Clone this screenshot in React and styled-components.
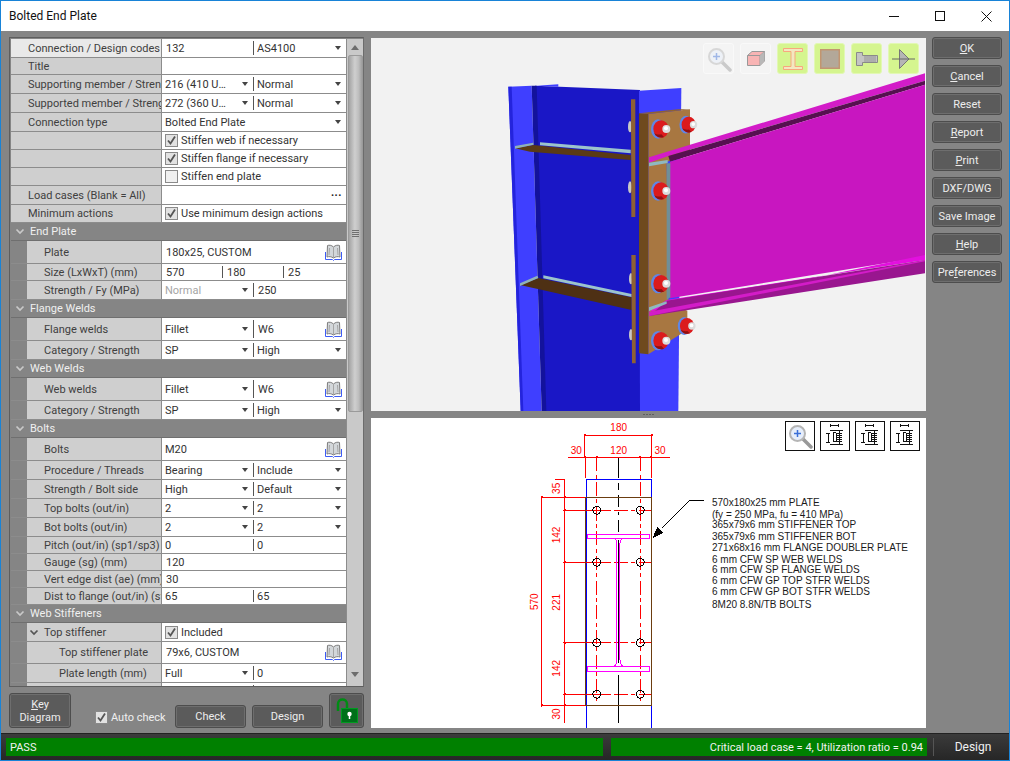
import styled, { createGlobalStyle } from "styled-components";

const GlobalStyle = createGlobalStyle`
  html, body { margin: 0; padding: 0; background: #fff; }
  * { box-sizing: border-box; }
`;

const Window = styled.div`
  width: 1010px;
  height: 761px;
  display: flex;
  flex-direction: column;
  border: 1px solid #1883d7;
  font-family: Roboto, "Noto Sans", sans-serif;
  font-size: 11px;
  overflow: hidden;
`;

const TitleBar = styled.div`
  height: 30px;
  flex: none;
  display: flex;
  align-items: center;
  padding-left: 8px;
  background: #fff;
  color: #111;
  font-size: 12px;
`;

const WinButtons = styled.div`
  margin-left: auto;
  display: flex;
`;

const WinButton = styled.div`
  width: 46px;
  height: 30px;
  display: flex;
  align-items: center;
  justify-content: center;
`;

const Body = styled.div`
  height: 702px;
  flex: none;
  display: flex;
  padding: 6px 7px 5px 8px;
  background: #858585;
`;

const LeftColumn = styled.div`
  width: 355px;
  display: flex;
  flex-direction: column;
`;

const Frame = styled.div`
  height: 650px;
  display: flex;
  padding: 1px 0 0 1px;
  border: 1px solid #5e5e5e;
  border-right-color: #6c6c6c;
`;

const Rows = styled.div`
  width: 335px;
  height: 100%;
  overflow: hidden;
`;

const RowLine = styled.div`
  display: flex;
  height: ${(p) => p.$h}px;
  border-bottom: 1px solid #8c8c8c;
  background: #858585;
`;

const Label = styled.div`
  width: ${(p) => (p.$nested ? 135 : 151)}px;
  margin-left: ${(p) => (p.$nested ? 16 : 0)}px;
  flex: none;
  display: flex;
  align-items: center;
  padding-left: ${(p) => p.$pad}px;
  background: ${(p) => (p.$active ? "#e9e9e9" : "#cfcfcf")};
  border-right: 1px solid #8c8c8c;
  color: #404040;
  white-space: nowrap;
  overflow: hidden;
`;

const Values = styled.div`
  flex: 1;
  min-width: 0;
  display: flex;
  background: #fff;
`;

const Value = styled.div`
  width: ${(p) => (p.$w ? `${p.$w}px` : "auto")};
  flex: ${(p) => (p.$w ? "none" : 1)};
  min-width: 0;
  display: flex;
  align-items: center;
  padding: 0 4px 0 ${(p) => p.$pad}px;
  border-right: ${(p) => (p.$split ? "1px solid #555" : "none")};
  margin: ${(p) => (p.$split ? "2px 0" : 0)};
  color: ${(p) => (p.$muted ? "#a5a5a5" : "#333")};
  white-space: nowrap;
  overflow: hidden;
`;

const ValueText = styled.span`
  flex: 1;
  overflow: hidden;
`;

const Caret = styled.span`
  flex: none;
  width: 0;
  height: 0;
  margin-right: 1px;
  border-left: 3.5px solid transparent;
  border-right: 3.5px solid transparent;
  border-top: 4px solid #444;
`;

const More = styled.span`
  flex: none;
  color: #222;
  font-weight: 700;
  letter-spacing: 0.5px;
  line-height: 1;
  transform: translateY(-3px);
`;

const Header = styled.div`
  height: ${(p) => p.$h}px;
  display: flex;
  align-items: center;
  padding: 0 0 1px 4px;
  gap: 5px;
  background: #858585;
  border-bottom: 1px solid #6f6f6f;
  color: #f0f0f0;
`;

const Box = styled.span`
  flex: none;
  width: 13px;
  height: 13px;
  display: inline-flex;
  align-items: center;
  justify-content: center;
  margin-right: 3px;
  background: ${(p) => (p.$on ? "#e2e2e2" : "#f0f0f0")};
  border: 1px solid #8a8a8a;
`;

const Track = styled.div`
  flex: 1;
  display: flex;
  flex-direction: column;
  align-items: center;
  background: #c9c9c9;
  border-left: 1px solid #8c8c8c;
`;

const TrackEnd = styled.div`
  height: 16px;
  flex: none;
  display: flex;
  align-items: center;
  justify-content: center;
  margin-top: ${(p) => (p.$down ? "auto" : 0)};
  padding-bottom: ${(p) => (p.$down ? 8 : 0)}px;
`;

const Arrow = styled.span`
  width: 0;
  height: 0;
  border-left: 4px solid transparent;
  border-right: 4px solid transparent;
  border-bottom: ${(p) => (p.$down ? "none" : "5px solid #6d6d6d")};
  border-top: ${(p) => (p.$down ? "5px solid #6d6d6d" : "none")};
`;

const Thumb = styled.div`
  width: 15px;
  height: 357px;
  flex: none;
  display: flex;
  flex-direction: column;
  align-items: center;
  justify-content: center;
  gap: 1px;
  background: linear-gradient(90deg, #a4a4a4, #cfcfcf 45%, #bdbdbd 75%, #9d9d9d);
  border: 1px solid #9a9a9a;
  border-radius: 2px;
`;

const Grip = styled.span`
  width: 7px;
  height: 1px;
  background: #6f6f6f;
`;

const BottomBar = styled.div`
  height: 35px;
  margin-top: 6px;
  display: flex;
  align-items: flex-end;
`;

const Button = styled.button`
  width: ${(p) => p.$w}px;
  height: ${(p) => p.$h}px;
  flex: none;
  margin-left: ${(p) => p.$ml || 0}px;
  padding: 0;
  display: flex;
  align-items: center;
  justify-content: center;
  text-align: center;
  font: inherit;
  line-height: 13px;
  color: #ededed;
  background: #5b5b5b;
  border: 1px solid #4d4d4d;
  border-radius: 3px;
  box-shadow: 0 0 0 1px #6e6e6e inset;
`;

const AutoCheck = styled.label`
  width: 80px;
  height: 16px;
  margin-left: 24px;
  margin-bottom: 3px;
  display: flex;
  align-items: center;
  color: #f0f0f0;
  white-space: nowrap;
`;

const Center = styled.div`
  width: 555px;
  margin-left: 7px;
  margin-top: 1px;
  display: flex;
  flex-direction: column;
`;

const ModelPane = styled.div`
  position: relative;
  height: 373px;
  flex: none;
  background: #f2f2f2;
`;

const Splitter = styled.div`
  height: 7px;
  flex: none;
  display: flex;
  align-items: center;
  justify-content: center;
  gap: 1px;
`;

const SplitDot = styled.span`
  width: 2px;
  height: 1px;
  background: #5f5f5f;
`;

const DrawingPane = styled.div`
  position: relative;
  height: 310px;
  flex: none;
  background: #fff;
`;

const Picture = styled.svg`
  display: block;
  width: 100%;
  height: 100%;
`;

const Overlay = styled.div`
  position: absolute;
  top: ${(p) => p.$top}px;
  right: ${(p) => p.$right}px;
  display: flex;
  gap: ${(p) => p.$gap}px;
`;

const ModelTool = styled.div`
  width: 31px;
  height: 31px;
  display: flex;
  align-items: center;
  justify-content: center;
  background: ${(p) => (p.$on ? "#d5f58f" : "#f4f4f4")};
  border: 1px solid ${(p) => (p.$on ? "#e2f8b4" : "#f9f9f9")};
  border-radius: 3px;
`;

const DrawTool = styled.div`
  width: 30px;
  height: 30px;
  display: flex;
  align-items: center;
  justify-content: center;
  background: #fff;
  border: 1px solid #111;
`;

const RightColumn = styled.div`
  width: 70px;
  margin-left: 6px;
  display: flex;
  flex-direction: column;
  gap: 6px;
`;

const StatusBar = styled.div`
  height: 27px;
  flex: none;
  display: flex;
  padding: 4px 0 4px 5px;
  background: linear-gradient(#3b3b3b, #262626);
  border-top: 1px solid #222;
`;

const StatusCell = styled.div`
  width: ${(p) => p.$w}px;
  height: 18px;
  margin-left: ${(p) => p.$ml || 0}px;
  display: flex;
  align-items: center;
  justify-content: ${(p) => (p.$end ? "flex-end" : "flex-start")};
  padding: 0 4px;
  background: #008000;
  color: #f2f2f2;
`;

const StatusLabel = styled.div`
  flex: 1;
  display: flex;
  align-items: center;
  justify-content: center;
  margin-left: 6px;
  padding-left: 3px;
  border-left: 1px solid #555;
  color: #f0f0f0;
  font-size: 12px;
`;

const ChevronWrap = styled.span`
  display: flex;
  margin-left: -15px;
  margin-right: 5px;
`;

const Chevron = ({ color = "#c9c9c9" }) => (
  <svg width="10" height="7" viewBox="0 0 10 7" style={{ flex: "none" }}>
    <path d="M1.5 1.5 5 5 8.5 1.5" fill="none" stroke={color} strokeWidth="1.7" />
  </svg>
);

const Tick = () => (
  <svg width="11" height="11" viewBox="0 0 11 11">
    <path d="M2 5.5 4.5 8.5 9 1.5" fill="none" stroke="#555" strokeWidth="1.8" />
  </svg>
);

const Book = () => (
  <svg width="17" height="17" viewBox="0 0 17 17" style={{ flex: "none" }}>
    <path d="M8.5 3C6.5 1 4 1 2.5 1.5L2 13C4 12.3 6.5 12.5 8.5 14 10.5 12.5 13 12.3 15 13L14.5 1.5C13 1 10.5 1 8.5 3Z" fill="#d3d7da" stroke="#7c7c7c" />
    <path d="M8.5 3V14M4.5 4 4 11M12.5 4 13 11" stroke="#a5a5a5" fill="none" />
    <path d="M.5 8V15.5H7.5L8.5 16.5 9.5 15.5H16.5V8" fill="none" stroke="#3d5cf5" />
  </svg>
);

const Check = ({ on, children }) => (
  <>
    <Box $on={on}>{on && <Tick />}</Box>
    {children}
  </>
);

const Cell = ({ c, w, split }) => (
  <Value $w={w} $split={split} $muted={c.muted} $pad={c.pad ?? 3}>
    {c.check !== undefined ? (
      <Check on={c.check}>{c.t}</Check>
    ) : (
      <ValueText>{c.t}</ValueText>
    )}
    {c.caret && <Caret />}
    {c.book && <Book />}
    {c.more && <More>...</More>}
  </Value>
);

// value cells: one wide, or split at the column line
const Row = ({ label, h, level = 0, active, open, cells = [{ t: "" }], widths }) => {
  const w = widths || (cells.length === 2 ? [92] : []);
  return (
    <RowLine $h={h}>
      <Label $nested={level > 0} $active={active} $pad={level === 2 ? 32 : 17}>
        {open && (
          <ChevronWrap>
            <Chevron color="#555" />
          </ChevronWrap>
        )}
        {label}
      </Label>
      <Values>
        {cells.map((c, i) => (
          <Cell key={i} c={c} w={w[i]} split={i < cells.length - 1} />
        ))}
      </Values>
    </RowLine>
  );
};

const sel = (t, extra) => ({ t, caret: true, ...extra });

const grid = [
  { label: "Connection / Design codes", h: 19, active: true, cells: [{ t: "132", pad: 4 }, sel("AS4100")] },
  { label: "Title", h: 17 },
  { label: "Supporting member / Strength", h: 19, cells: [sel("216 (410 U…"), sel("Normal")] },
  { label: "Supported member / Strength", h: 19, cells: [sel("272 (360 U…"), sel("Normal")] },
  { label: "Connection type", h: 19, cells: [sel("Bolted End Plate")] },
  { label: "", h: 18, cells: [{ t: "Stiffen web if necessary", check: true }] },
  { label: "", h: 18, cells: [{ t: "Stiffen flange if necessary", check: true }] },
  { label: "", h: 18, cells: [{ t: "Stiffen end plate", check: false }] },
  { label: "Load cases (Blank = All)", h: 19, cells: [{ t: "", more: true }] },
  { label: "Minimum actions", h: 18, cells: [{ t: "Use minimum design actions", check: true }] },
  { header: "End Plate", h: 18 },
  { label: "Plate", h: 23, level: 1, cells: [{ t: "180x25, CUSTOM", pad: 4, book: true }] },
  { label: "Size (LxWxT) (mm)", h: 17, level: 1, widths: [61, 61], cells: [{ t: "570", pad: 4 }, { t: "180", pad: 4 }, { t: "25", pad: 4 }] },
  { label: "Strength / Fy (MPa)", h: 19, level: 1, cells: [sel("Normal", { muted: true }), { t: "250", pad: 4 }] },
  { header: "Flange Welds", h: 18 },
  { label: "Flange welds", h: 23, level: 1, cells: [sel("Fillet"), { t: "W6", book: true, pad: 4 }] },
  { label: "Category / Strength", h: 19, level: 1, cells: [sel("SP"), sel("High")] },
  { header: "Web Welds", h: 18 },
  { label: "Web welds", h: 23, level: 1, cells: [sel("Fillet"), { t: "W6", book: true, pad: 4 }] },
  { label: "Category / Strength", h: 19, level: 1, cells: [sel("SP"), sel("High")] },
  { header: "Bolts", h: 18 },
  { label: "Bolts", h: 23, level: 1, cells: [{ t: "M20", book: true }] },
  { label: "Procedure / Threads", h: 19, level: 1, cells: [sel("Bearing"), sel("Include")] },
  { label: "Strength / Bolt side", h: 19, level: 1, cells: [sel("High"), sel("Default")] },
  { label: "Top bolts (out/in)", h: 19, level: 1, cells: [sel("2"), sel("2")] },
  { label: "Bot bolts (out/in)", h: 19, level: 1, cells: [sel("2"), sel("2")] },
  { label: "Pitch (out/in) (sp1/sp3) (mm)", h: 17, level: 1, cells: [{ t: "0" }, { t: "0" }] },
  { label: "Gauge (sg) (mm)", h: 17, level: 1, cells: [{ t: "120", pad: 4 }] },
  { label: "Vert edge dist (ae) (mm)", h: 17, level: 1, cells: [{ t: "30", pad: 4 }] },
  { label: "Dist to flange (out/in) (sf1/sf3) (mm)", h: 17, level: 1, cells: [{ t: "65" }, { t: "65" }] },
  { header: "Web Stiffeners", h: 18 },
  { label: "Top stiffener", h: 19, level: 1, open: true, cells: [{ t: "Included", check: true }] },
  { label: "Top stiffener plate", h: 22, level: 2, cells: [{ t: "79x6, CUSTOM", pad: 4, book: true }] },
  { label: "Plate length (mm)", h: 19, level: 2, cells: [sel("Full"), { t: "0" }] },
  { label: "", h: 19, level: 2, cells: [{ t: "" }, { t: "" }] },
];

const sideButtons = [
  [<u key="u">O</u>, "K"],
  [<u key="u">C</u>, "ancel"],
  ["Reset"],
  [<u key="u">R</u>, "eport"],
  [<u key="u">P</u>, "rint"],
  ["DXF/DWG"],
  ["Save Image"],
  [<u key="u">H</u>, "elp"],
  ["Pre", <u key="u">f</u>, "erences"],
];

const Nut = ({ x, y, s = 1 }) => (
  <g transform={`translate(${x} ${y}) scale(${s})`}>
    <ellipse cx="-8" cy="0" rx="21" ry="29" fill="#5f86e6" />
    <ellipse cx="1" cy="0" rx="23" ry="26" fill="#db1b1d" />
    <path d="M-20 12C-14 24 0 28 10 24L2 16C-6 18-14 16-20 12Z" fill="#8d1212" />
    <circle cx="17" cy="0" r="12" fill="#dcdcdc" />
    <circle cx="16" cy="-2" r="6" fill="#fff" />
  </g>
);

const Model = () => (
  <Picture viewBox="371 38 555 373">
    <g transform="translate(490 40) scale(0.33333)">
      {/* column */}
      <polygon points="55,140 125,137 155,1113 92,1113" fill="#3f3fff" />
      <polygon points="55,140 65,140 100,1113 92,1113" fill="#2424dc" />
      <polygon points="135,137 450,150 450,1113 165,1113" fill="#1a17c6" />
      <polygon points="125,137 140,137 169,1113 155,1113" fill="#13129c" />
      <polygon points="140,137 205,133 205,140" fill="#3f3fff" />
      <polygon points="447,152 574,144 565,1113 450,1113" fill="#3f3fff" />
      {/* stiffeners */}
      <polygon points="75,325 130,315 422,345 422,360 120,335" fill="#5a3a15" />
      <polygon points="150,307 422,329 422,340 150,316" fill="#9cc4cc" />
      <polygon points="75,318 130,308 130,314 75,326" fill="#8fb2b8" />
      <polygon points="90,735 145,714 425,772 425,810" fill="#4e3014" />
      <polygon points="160,706 425,762 425,771 160,715" fill="#9cc4cc" />
      <polygon points="90,730 142,707 145,714 90,738" fill="#8fb2b8" />
      {/* bolts behind the column flange */}
      <ellipse cx="420" cy="260" rx="6" ry="17" fill="#c8c8c8" />
      <ellipse cx="420" cy="442" rx="6" ry="18" fill="#c8c8c8" />
      <ellipse cx="423" cy="716" rx="6" ry="17" fill="#c8c8c8" />
      <ellipse cx="423" cy="884" rx="6" ry="17" fill="#c8c8c8" />
      {/* doubler plates */}
      <polygon points="423,178 436,178 436,531 424,531" fill="#8f6134" />
      <polygon points="424,645 437,645 437,970 426,970" fill="#8f6134" />
      {/* end plate */}
      <polygon points="475,222 600,208 600,345 530,365 535,790 592,812 592,870 475,943" fill="#a87741" />
      <polygon points="447,220 475,222 475,943 447,940" fill="#6f4a1e" />
      <polygon points="447,220 565,208 600,208 475,222" fill="#8f6232" />
      {/* beam */}
      <polygon points="477,352 1305,100 1305,122 535,348 477,368" fill="#d31cc8" />
      <polygon points="535,348 1305,122 1305,134 540,365" fill="#561050" />
      <polygon points="540,365 1305,134 1305,650 540,775" fill="#c816c0" />
      <polygon points="477,815 1305,645 1305,660 530,780" fill="#e310df" />
      <polygon points="478,828 530,782 1305,660 1305,700" fill="#99168f" />
      <polygon points="478,815 1305,660 1305,664 478,828" fill="#d31cc8" />
      <polygon points="530,370 541,370 541,772 530,780" fill="#6f8f98" />
      <polygon points="477,368 533,360 533,369 477,379" fill="#8fb9c0" />
      <polygon points="477,802 530,784 530,791 477,813" fill="#8fb9c0" />
      <Nut x={512} y={267} />
      <Nut x={595} y={254} s={0.92} />
      <Nut x={512} y={453} />
      <Nut x={512} y={731} />
      <Nut x={590} y={858} s={0.92} />
      <Nut x={512} y={902} />
    </g>
  </Picture>
);

const dimText = {
  fill: "#ff0000",
  fontFamily: "Liberation Sans, sans-serif",
  fontSize: 30,
  textAnchor: "middle",
};

const Dim = ({ x, y, v, up }) => (
  <text {...dimText} x={x} y={y} transform={up ? `rotate(-90 ${x} ${y})` : undefined}>
    {v}
  </text>
);

const noteLines = [
  ["570x180x25 mm PLATE", 505.5],
  ["(fy = 250 MPa, fu = 410 MPa)", 517.5],
  ["365x79x6 mm STIFFENER TOP", 528],
  ["365x79x6 mm STIFFENER BOT", 539.5],
  ["271x68x16 mm FLANGE DOUBLER PLATE", 550.5],
  ["6 mm CFW SP WEB WELDS", 562.5],
  ["6 mm CFW SP FLANGE WELDS", 573],
  ["6 mm CFW GP TOP STFR WELDS", 584],
  ["6 mm CFW GP BOT STFR WELDS", 595],
  ["8M20 8.8N/TB BOLTS", 607.5],
];

const boltRows = [286, 442, 683, 838];

const dimDots = [
  [195, 61], [395, 61], [196, 127], [230, 127], [361, 127], [394, 127],
  [134, 247], [134, 286], [134, 442], [134, 683], [134, 838], [134, 871],
  [65, 247], [65, 871],
];

const Drawing = () => (
  <Picture viewBox="371 418 555 310">
    <g transform="translate(520 415) scale(0.33333)" fill="none" strokeWidth="3" shapeRendering="crispEdges">
      <g stroke="#0000ff">
        <path d="M199 940V193H394V940" />
      </g>
      <g stroke="#ff0000">
        <path d="M195 127V61H395V127M145 127H450M196 127V190M394 127V190" />
        <path d="M230 127V860M361 127V860" strokeDasharray="42 10 12 10" />
        <path d="M62 247H197M62 871H197M65 245V875M134 195V925M104 195H134M104 247H134" />
        {boltRows.map((y) => (
          <g key={y}>
            <path d={`M130 ${y}H260`} />
            <path d={`M260 ${y}H395`} strokeDasharray="12 10 42 10" />
          </g>
        ))}
        {dimDots.map(([x, y]) => (
          <rect key={`${x}-${y}`} x={x - 3} y={y - 3} width="6" height="6" fill="#ff0000" stroke="none" />
        ))}
      </g>
      <g stroke="#000">
        <path d="M296 130V190M296 205V225M296 240V275M296 290V300M296 315V350M296 375V745M296 780V925" />
        {boltRows.map((y) => (
          <g key={y}>
            <circle cx="230" cy={y} r="12" />
            <circle cx="361" cy={y} r="12" />
          </g>
        ))}
      </g>
      <rect x="197" y="247" width="197" height="624" stroke="#6b3d0f" />
      <g stroke="#ff00ff">
        <rect x="202" y="358" width="187" height="13" />
        <rect x="202" y="754" width="187" height="16" />
        <path d="M281 371C288 372 291 376 291 385V735C291 745 288 752 281 754M310 371C303 372 300 376 300 385V735C300 745 303 752 310 754" />
      </g>
      <path d="M552 258H508L425 340" stroke="#000" />
      <polygon points="397,370 412,335 431,353" fill="#000" />
      <g stroke="none" shapeRendering="auto">
        <Dim x={296} y={47} v="180" />
        <Dim x={169} y={116} v="30" />
        <Dim x={296} y={116} v="120" />
        <Dim x={420} y={116} v="30" />
        <Dim x={120} y={220} v="35" up />
        <Dim x={120} y={360} v="142" up />
        <Dim x={120} y={562} v="221" up />
        <Dim x={120} y={760} v="142" up />
        <Dim x={120} y={897} v="30" up />
        <Dim x={55} y={560} v="570" up />
      </g>
    </g>
    <g fill="#1a1a1a" fontFamily="Liberation Sans, sans-serif" fontSize="10">
      {noteLines.map(([t, y]) => (
        <text key={t} x={712} y={y}>
          {t}
        </text>
      ))}
    </g>
  </Picture>
);

const Lens = ({ faded }) => (
  <svg width="26" height="26" viewBox="0 0 26 26" opacity={faded ? 0.45 : 1}>
    <path d="M15 15 24 24" stroke="#999" strokeWidth="3.5" strokeLinecap="round" />
    <circle cx="10.5" cy="10.5" r="7.5" fill="#e6eefb" stroke="#b5b5b5" strokeWidth="2" />
    <path d="M10.5 7V14M7 10.5H14" stroke="#3a6fd8" strokeWidth="1.5" />
  </svg>
);

const SectionIcon = () => (
  <svg width="20" height="22" viewBox="0 0 20 22">
    <path d="M.5 .5H19.5V3.5H12V18.5H19.5V21.5H.5V18.5H8V3.5H.5Z" fill="#f3e8c0" stroke="#f8a77e" />
  </svg>
);

const ModelTools = () => (
  <Overlay $top={5} $right={7} $gap={6}>
    <ModelTool>
      <Lens faded />
    </ModelTool>
    <ModelTool>
      <svg width="18" height="15" viewBox="0 0 18 15">
        <path d="M.5 4.5 5 .5H17.5V10L13 14.5H.5Z" fill="#f8b4b4" stroke="#999" />
        <path d="M.5 4.5H13V14.5M13 4.5 17.5 .5" fill="none" stroke="#999" />
        <path d="M13 4.5 17.5 .5V10L13 14.5Z" fill="#b8b8b8" />
      </svg>
    </ModelTool>
    <ModelTool $on>
      <SectionIcon />
    </ModelTool>
    <ModelTool $on>
      <svg width="20" height="20" viewBox="0 0 20 20">
        <rect x=".75" y=".75" width="18.5" height="18.5" fill="#b3a899" stroke="#c29570" strokeWidth="1.5" />
      </svg>
    </ModelTool>
    <ModelTool $on>
      <svg width="22" height="14" viewBox="0 0 22 14">
        <path d="M.5 .5H6.5V3.5H21.5V10.5H6.5V13.5H.5Z" fill="#c4c4c4" stroke="#8a8a8a" />
        <path d="M9 3.5V10.5M11 3.5V10.5M13 3.5V10.5M15 3.5V10.5M17 3.5V10.5M19 3.5V10.5" stroke="#8a8a8a" strokeWidth=".8" />
      </svg>
    </ModelTool>
    <ModelTool $on>
      <svg width="23" height="20" viewBox="0 0 23 20">
        <path d="M7.5 .5V19.5L17 10Z" fill="#b5b5b5" stroke="#777" />
        <path d="M0 10H23" stroke="#666" />
      </svg>
    </ModelTool>
  </Overlay>
);

const ViewIcon = () => (
  <svg width="26" height="26" viewBox="0 0 26 26" shapeRendering="crispEdges">
    <path
      d="M8 2.5H16M8 1V4M16 1V4M4 10.5H8M4 19.5H8M6 10V20M8 7.5H21M8 21.5H21M17 7V22M11 10V19M14 10V19M11 9.5H14M11 18.5H14M15 10.5H20M15 12.5H20M15 14.5H20M15 16.5H20M15 18.5H20"
      stroke="#111"
      strokeWidth="1"
      fill="none"
    />
  </svg>
);

const Lock = () => (
  <svg width="28" height="28" viewBox="0 0 28 28">
    <path d="M5 14V7C5 1 14 1 14 7V11" fill="none" stroke="#008c14" strokeWidth="2.5" />
    <rect x="8.5" y="11.5" width="16" height="14" fill="#00701a" stroke="#009a20" />
    <circle cx="16.5" cy="17" r="2.2" fill="#fff" />
    <path d="M16.5 18V22" stroke="#fff" strokeWidth="1.5" />
  </svg>
);

const App = () => (
  <Window>
    <GlobalStyle />
    <TitleBar>
      Bolted End Plate
      <WinButtons>
        <WinButton>
          <svg width="10" height="10"><path d="M0 5.5H10" stroke="#111" /></svg>
        </WinButton>
        <WinButton>
          <svg width="10" height="10"><rect x=".5" y=".5" width="9" height="9" fill="none" stroke="#111" /></svg>
        </WinButton>
        <WinButton>
          <svg width="11" height="11"><path d="M.5 .5 10.5 10.5M10.5 .5 .5 10.5" stroke="#111" /></svg>
        </WinButton>
      </WinButtons>
    </TitleBar>
    <Body>
      <LeftColumn>
        <Frame>
          <Rows>
            {grid.map((r, i) =>
              r.header ? (
                <Header key={i} $h={r.h}>
                  <Chevron />
                  {r.header}
                </Header>
              ) : (
                <Row key={i} {...r} />
              )
            )}
          </Rows>
          <Track>
            <TrackEnd>
              <Arrow />
            </TrackEnd>
            <Thumb>
              <Grip />
              <Grip />
              <Grip />
              <Grip />
            </Thumb>
            <TrackEnd $down>
              <Arrow $down />
            </TrackEnd>
          </Track>
        </Frame>
        <BottomBar>
          <Button $w={62} $h={35}>
            <span><u>K</u>ey<br />Diagram</span>
          </Button>
          <AutoCheck>
            <Check on>Auto check</Check>
          </AutoCheck>
          <Button $w={71} $h={23}>Check</Button>
          <Button $w={71} $h={23} $ml={6}>Design</Button>
          <Button $w={35} $h={35} $ml={6}><Lock /></Button>
        </BottomBar>
      </LeftColumn>
      <Center>
        <ModelPane>
          <Model />
          <ModelTools />
        </ModelPane>
        <Splitter>
          <SplitDot />
          <SplitDot />
          <SplitDot />
          <SplitDot />
        </Splitter>
        <DrawingPane>
          <Drawing />
          <Overlay $top={3} $right={6} $gap={5}>
            <DrawTool><Lens /></DrawTool>
            <DrawTool><ViewIcon /></DrawTool>
            <DrawTool><ViewIcon /></DrawTool>
            <DrawTool><ViewIcon /></DrawTool>
          </Overlay>
        </DrawingPane>
      </Center>
      <RightColumn>
        {sideButtons.map((b, i) => (
          <Button key={i} $w={70} $h={22}>
            <span>{b}</span>
          </Button>
        ))}
      </RightColumn>
    </Body>
    <StatusBar>
      <StatusCell $w={597}>PASS</StatusCell>
      <StatusCell $w={316} $ml={8} $end>Critical load case = 4, Utilization ratio = 0.94</StatusCell>
      <StatusLabel>Design</StatusLabel>
    </StatusBar>
  </Window>
);

export default App;
